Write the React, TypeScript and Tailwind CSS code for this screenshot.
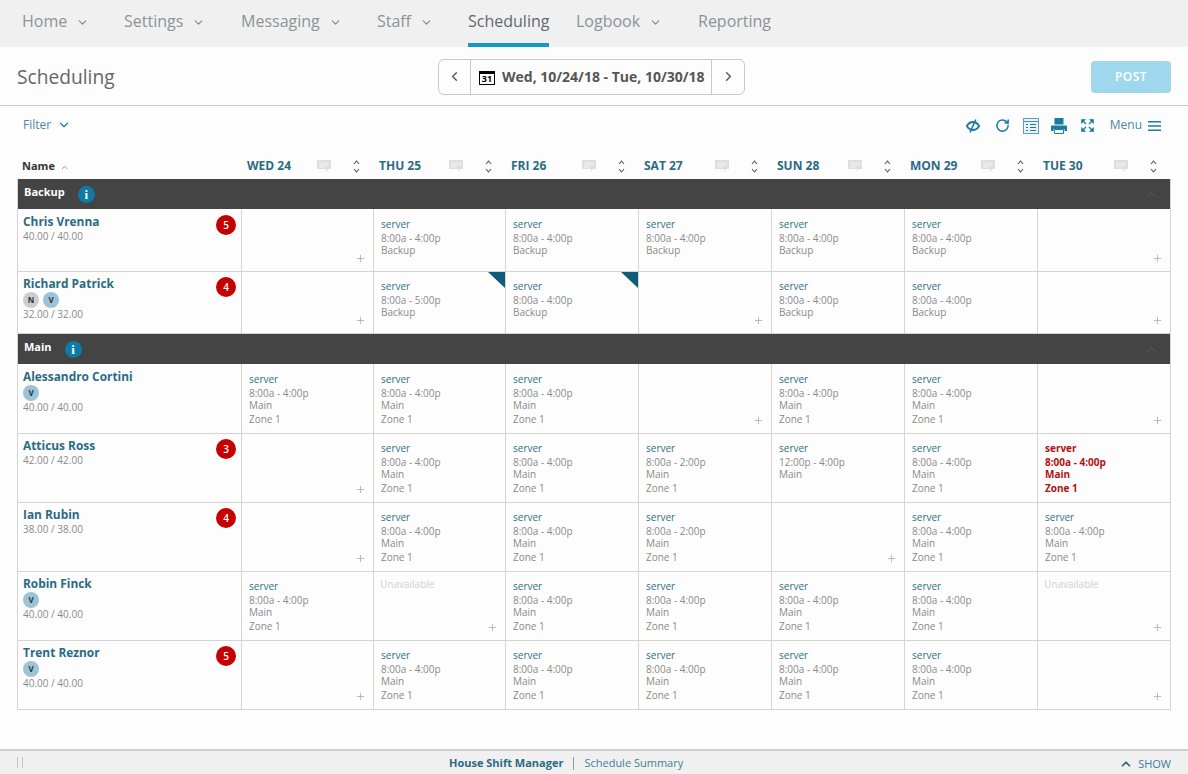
import { ChevronDown, ChevronLeft, ChevronRight, ChevronUp, Plus, RotateCw } from "lucide-react";

type Shift = { time: string; where: string; zone?: boolean; alert?: boolean };
type Cell = Shift | "unavailable" | null;

const nav = [
  { label: "Home", width: "w-[102px]", caret: true },
  { label: "Settings", width: "w-[117px]", caret: true },
  { label: "Messaging", width: "w-[136px]", caret: true },
  { label: "Staff", width: "w-[91px]", caret: true },
  { label: "Scheduling", width: "w-[108px]", active: true },
  { label: "Logbook", width: "w-[122px]", caret: true },
  { label: "Reporting", width: "w-[90px]" },
];

const days = ["WED 24", "THU 25", "FRI 26", "SAT 27", "SUN 28", "MON 29", "TUE 30"];

const backup: Shift = { time: "8:00a - 4:00p", where: "Backup" };
const main: Shift = { time: "8:00a - 4:00p", where: "Main", zone: true };

type Person = {
  name: string;
  hours: string;
  badge?: number;
  tags?: string[];
  height: string;
  compact?: boolean;
  corners?: number[];
  cells: Cell[];
};

const backupRows: Person[] = [
  {
    name: "Chris Vrenna",
    hours: "40.00 / 40.00",
    badge: 5,
    height: "h-[63px]",
    cells: [null, backup, backup, backup, backup, backup, null],
  },
  {
    name: "Richard Patrick",
    hours: "32.00 / 32.00",
    badge: 4,
    tags: ["N", "V"],
    height: "h-[62px]",
    compact: true,
    corners: [1, 2],
    cells: [null, { time: "8:00a - 5:00p", where: "Backup" }, backup, null, backup, backup, null],
  },
];

const mainRows: Person[] = [
  {
    name: "Alessandro Cortini",
    hours: "40.00 / 40.00",
    tags: ["V"],
    height: "h-[70px]",
    cells: [main, main, main, null, main, main, null],
  },
  {
    name: "Atticus Ross",
    hours: "42.00 / 42.00",
    badge: 3,
    height: "h-[69px]",
    compact: true,
    cells: [
      null,
      main,
      main,
      { time: "8:00a - 2:00p", where: "Main", zone: true },
      { time: "12:00p - 4:00p", where: "Main" },
      main,
      { time: "8:00a - 4:00p", where: "Main", zone: true, alert: true },
    ],
  },
  {
    name: "Ian Rubin",
    hours: "38.00 / 38.00",
    badge: 4,
    height: "h-[69px]",
    compact: true,
    cells: [null, main, main, { time: "8:00a - 2:00p", where: "Main", zone: true }, null, main, main],
  },
  {
    name: "Robin Finck",
    hours: "40.00 / 40.00",
    tags: ["V"],
    height: "h-[69px]",
    compact: true,
    cells: [main, "unavailable", main, main, main, main, "unavailable"],
  },
  {
    name: "Trent Reznor",
    hours: "40.00 / 40.00",
    badge: 5,
    tags: ["V"],
    height: "h-[69px]",
    compact: true,
    cells: [null, main, main, main, main, main, null],
  },
];

function CommentIcon() {
  return (
    <svg width="14" height="13" viewBox="0 0 14 13" className="text-[#dedede]">
      <path d="M0 0h14v9h-3l-2 3V9H0z" fill="currentColor" />
      <path d="M2 3h10M2 5h10M2 7h6" stroke="#f7f7f7" strokeWidth="0.8" />
    </svg>
  );
}

function SortIcon() {
  return (
    <svg width="7" height="13" viewBox="0 0 7 13" fill="none" stroke="#555" strokeWidth="1.1">
      <path d="M1 4l2.5-3L6 4M1 9l2.5 3L6 9" />
    </svg>
  );
}

function ShiftCell({ cell, corner, compact }: { cell: Cell; corner?: boolean; compact?: boolean }) {
  return (
    <div className={`relative border-l border-[#d4d4d4] pl-[7px] text-[10px] ${compact ? "pt-[7px]" : "pt-[8px]"}`}>
      {corner && (
        <svg width="17" height="16" viewBox="0 0 17 16" className="absolute right-0 top-0">
          <path d="M0 0h17v16z" fill="#0f5c78" />
        </svg>
      )}
      {cell === "unavailable" && (
        <div className="-ml-[1px] -mt-[2px] h-[14px] leading-[14px] text-[#d0d0d0]">Unavailable</div>
      )}
      {cell && cell !== "unavailable" && (
        <div className={cell.alert ? "font-bold text-[#b30f0f]" : "text-[#8a8a8a]"}>
          <div className={cell.alert ? "h-[14px] leading-[14px]" : "h-[14px] leading-[14px] text-[#2f6f86]"}>server</div>
          <div className="h-[13px] leading-[14px]">{cell.time}</div>
          <div className="h-[13px] leading-[13px]">{cell.where}</div>
          {cell.zone && <div className="h-[14px] leading-[15px]">Zone 1</div>}
        </div>
      )}
      {(cell === null || cell === "unavailable") && (
        <Plus size={11} strokeWidth={2} className="absolute bottom-[7px] right-[7px] text-[#b5b5b5]" />
      )}
    </div>
  );
}

function PersonRow({ person }: { person: Person }) {
  return (
    <div
      className={`grid grid-cols-[223px_132px_132px_133px_133px_133px_133px_133px] border-b border-[#d4d4d4] ${person.height}`}
    >
      <div className={`relative pl-[5px] ${person.compact ? "pt-[3px]" : "pt-[4px]"}`}>
        <div className="text-[11.9px] font-bold leading-[17px] text-[#2a6b84]">{person.name}</div>
        {person.tags && (
          <div className="flex gap-[4px]">
            {person.tags.map((tag) => (
              <span
                key={tag}
                className={`flex h-[16px] w-[16px] items-center justify-center rounded-full text-[8px] font-bold text-[#333] ${
                  tag === "N" ? "bg-[#c9cfd1]" : "bg-[#9cc4d6]"
                }`}
              >
                {tag}
              </span>
            ))}
          </div>
        )}
        <div className="text-[10px] leading-[13px] text-[#8a8a8a]">{person.hours}</div>
        {person.badge && (
          <span
            className={`absolute right-[5px] flex h-[20px] w-[20px] items-center justify-center rounded-full bg-[#c40000] text-[10px] font-semibold text-white ${
              person.compact ? "top-[5px]" : "top-[6px]"
            }`}
          >
            {person.badge}
          </span>
        )}
      </div>
      {person.cells.map((cell, i) => (
        <ShiftCell key={i} cell={cell} corner={person.corners?.includes(i)} compact={person.compact} />
      ))}
    </div>
  );
}

function GroupBand({ label }: { label: string }) {
  return (
    <div className="relative flex h-[30px] items-start bg-[#444444]">
      <span className="pl-[6px] pt-[5px] text-[11px] font-bold leading-[15px] text-white">{label}</span>
      <span className="ml-[13px] mt-[7px] flex h-[17px] w-[17px] items-center justify-center rounded-full bg-[#0f7aa3] font-['Liberation_Serif',serif] text-[13px] font-bold text-white">
        i
      </span>
      <ChevronUp size={15} strokeWidth={1.5} className="absolute right-[11px] top-[8px] text-[#5e5e5e]" />
    </div>
  );
}

export default function App() {
  return (
    <div className="flex h-[774px] w-[1188px] flex-col overflow-hidden bg-[#fdfdfd] font-['Open_Sans',sans-serif]">
      <nav className="flex h-[47px] shrink-0 bg-[#f0f0f0] pl-[22px]">
        {nav.map((item) => (
          <div key={item.label} className={`${item.width} shrink-0`}>
            <div
              className={`flex h-[47px] w-fit items-center text-[16px] ${
                item.active ? "border-b-[4px] border-[#129ac4] pb-[1px] text-[#5f6a70]" : "pb-[5px] text-[#8a9499]"
              }`}
            >
              {item.label}
              {item.caret && <ChevronDown size={13} strokeWidth={2.1} className="ml-[9px] mt-[3px] text-[#7d868a]" />}
            </div>
          </div>
        ))}
      </nav>

      <header className="relative flex h-[59px] shrink-0 items-start justify-between border-b border-[#cfcfcf] px-[17px]">
        <h1 className="pt-[16px] text-[19.2px] font-normal leading-[28px] text-[#666]">Scheduling</h1>
        <div className="absolute left-[438px] top-[12px] flex h-[36px] w-[307px] items-stretch rounded-[6px] border border-[#c9c9c9] bg-[#fdfdfd]">
          <div className="flex w-[32px] items-center justify-center border-r border-[#c9c9c9] pb-[2px]">
            <ChevronLeft size={15} strokeWidth={2.2} className="text-[#555]" />
          </div>
          <div className="flex flex-1 items-center gap-[7px] border-r border-[#c9c9c9] pl-[8px]">
            <span className="mt-[2px] flex h-[14px] w-[16px] items-end justify-center border border-t-[3px] border-black text-[9px] font-bold leading-[10px] text-black">
              31
            </span>
            <span className="-mt-[1px] whitespace-nowrap text-[14px] font-bold text-[#555]">
              Wed, 10/24/18 - Tue, 10/30/18
            </span>
          </div>
          <div className="flex w-[32px] items-center justify-center pb-[2px]">
            <ChevronRight size={15} strokeWidth={2.2} className="text-[#555]" />
          </div>
        </div>
        <button
          type="button"
          className="mt-[14px] h-[32px] w-[80px] rounded-[4px] bg-[#9fd8ec] text-[12px] font-semibold tracking-[0.5px] text-white"
        >
          POST
        </button>
      </header>

      <div className="flex h-[46px] shrink-0 items-start justify-between pl-[23px] pr-[27px] pt-[11px]">
        <div className="-mt-[1px] flex items-center gap-[6px] text-[12px] text-[#4a86a3]">
          Filter
          <ChevronDown size={14} strokeWidth={2} className="text-[#1a7ba3]" />
        </div>
        <div className="flex items-center text-[#1a7ba3]">
          <svg width="14" height="14" viewBox="0 0 14 14" fill="none" className="mr-[15px]">
            <path d="M0.800 7c1.600-2.600 3.600-4 6.200-4s4.600 1.400 6.200 4c-1.600 2.600-3.600 4-6.200 4S2.400 9.600 0.800 7z" stroke="currentColor" strokeWidth="1.900" />
            <path d="M9.800 0.500L4 13.500" stroke="currentColor" strokeWidth="1.600" />
          </svg>
          <RotateCw size={15} strokeWidth={2.400} className="mr-[13px]" />
          <svg width="16" height="16" viewBox="0 0 16 16" fill="none" className="mr-[12px]" stroke="currentColor">
            <rect x="0.500" y="0.500" width="15" height="15" strokeOpacity="0.700" fill="#e9f3f7" />
            <path d="M1 3.500h14" strokeOpacity="0.800" />
            <path d="M3 6.500h2M3 9.500h2M3 12.500h2M7 6.500h6M7 9.500h6M7 12.500h6" />
          </svg>
          <svg width="16" height="16" viewBox="0 0 16 16" fill="currentColor" className="mr-[14px]">
            <path d="M3.500 0h9v6.500h-9z" />
            <path d="M1 7.500h14a1 1 0 0 1 1 1V13h-2.500v-2h-11v2H0V8.500a1 1 0 0 1 1-1z" />
            <path d="M3.500 11.500h9v4h-9z" fill="none" stroke="currentColor" />
          </svg>
          <svg width="13" height="13" viewBox="0 0 13 13" fill="none" className="mr-[16px]">
            <path d="M0.500 0.500h4L0.500 4.500zM12.500 0.500v4l-4-4zM0.500 12.500v-4l4 4zM12.500 12.500h-4l4-4z" fill="currentColor" stroke="currentColor" strokeWidth="0.600" />
            <path d="M2 2l3 3M11 2L8 5M2 11l3-3M11 11L8 8" stroke="currentColor" strokeWidth="1.400" />
          </svg>
          <span className="-mt-[1px] mr-[6px] text-[12px] text-[#4a86a3]">Menu</span>
          <svg width="13" height="10" viewBox="0 0 13 10" fill="currentColor">
            <path d="M0 0h13v1.600H0zM0 4.200h13v1.600H0zM0 8.400h13V10H0z" />
          </svg>
        </div>
      </div>

      <div className="ml-[17px] w-[1154px]">
        <div className="grid h-[27px] grid-cols-[224px_132px_132px_133px_133px_133px_133px_133px]">
          <div className="flex items-center gap-[5px] pl-[5px] pt-[1px] text-[11px] font-bold text-[#333]">
            Name
            <ChevronUp size={9} strokeWidth={2} className="mt-[2px] text-[#777]" />
          </div>
          {days.map((day) => (
            <div key={day} className="flex items-center pl-[6px] pr-[13px] pt-[1px]">
              <span className="text-[12px] font-bold text-[#2a6b84]">{day}</span>
              <span className="ml-auto mr-[22px] flex">
                <CommentIcon />
              </span>
              <SortIcon />
            </div>
          ))}
        </div>
        <div className="border-l border-r border-[#d4d4d4]">
          <GroupBand label="Backup" />
          {backupRows.map((person) => (
            <PersonRow key={person.name} person={person} />
          ))}
          <GroupBand label="Main" />
          {mainRows.map((person) => (
            <PersonRow key={person.name} person={person} />
          ))}
        </div>
      </div>

      <footer className="relative mt-auto flex h-[25px] shrink-0 items-center border-t-2 border-[#d0d0d0] bg-[#f0f0f0] pl-[449px] pt-[1px]">
        <span className="absolute left-[17px] top-[6px] h-[11px] w-[6px] border-x border-[#c4c4c4]" />
        <span className="text-[11px] font-bold text-[#2a6b84]">House Shift Manager</span>
        <span className="mx-[10px] h-[13px] w-px bg-[#999]" />
        <span className="text-[11px] text-[#3f7f99]">Schedule Summary</span>
        <div className="absolute right-[17px] top-[5px] flex items-center gap-[5px] text-[11px] text-[#3f7f99]">
          <ChevronUp size={14} strokeWidth={3} className="text-[#2a6b84]" />
          SHOW
        </div>
      </footer>
    </div>
  );
}
